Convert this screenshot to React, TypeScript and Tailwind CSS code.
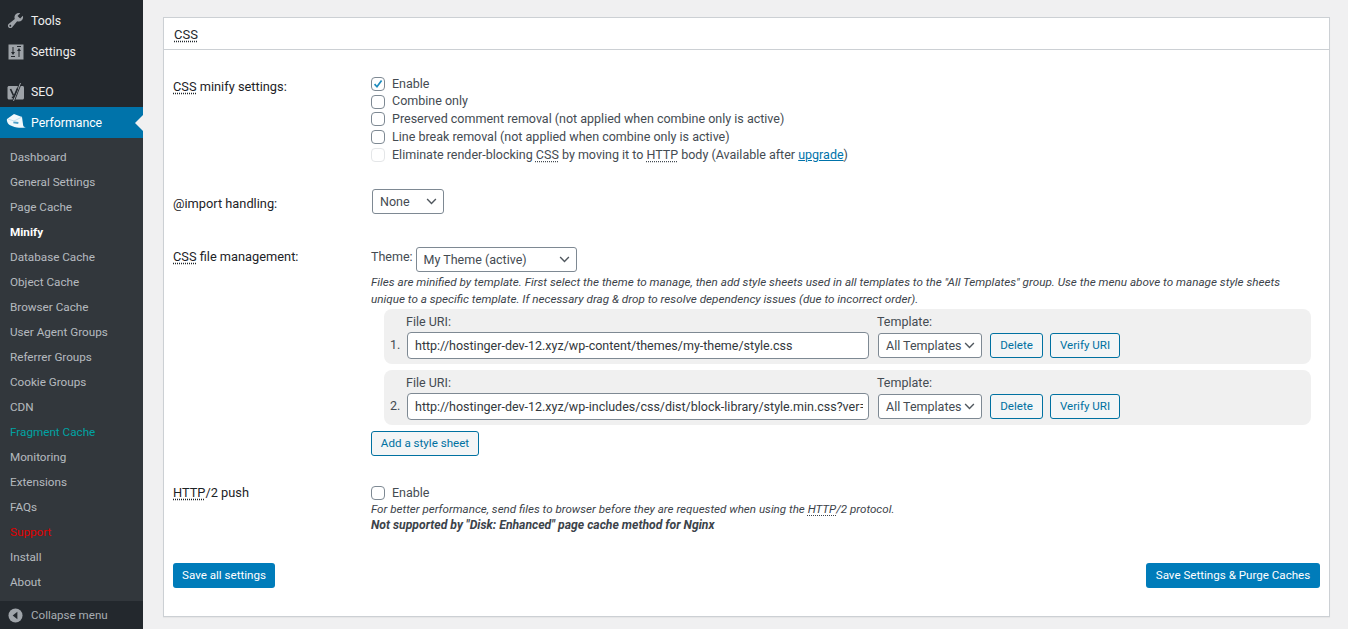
import React from "react";

const font = "font-['Roboto','Noto_Sans',sans-serif]";

function Abbr({ children }: { children: React.ReactNode }) {
  return <span className="underline decoration-dotted underline-offset-2">{children}</span>;
}

function Check({ checked, disabled, label }: { checked?: boolean; disabled?: boolean; label: React.ReactNode }) {
  return (
    <div className="flex items-center h-[17.8px]">
      <span className={`w-[14px] h-[14px] shrink-0 rounded-[4px] border flex items-center justify-center bg-white ${disabled ? "border-[#e4e6e8]" : "border-[#7e8993]"}`}>
        {checked && (
          <svg viewBox="0 0 14 14" className="w-[14px] h-[14px]"><path d="M3 7.2l2.8 3L11.2 2.8" fill="none" stroke="#1e8cbe" strokeWidth="2" /></svg>
        )}
      </span>
      <span className="ml-[7px] whitespace-nowrap">{label}</span>
    </div>
  );
}

function Chevron() {
  return (
    <svg viewBox="0 0 12 8" className="w-[11px] h-[7px] shrink-0"><path d="M1 1.2l5 5 5-5" fill="none" stroke="#50575e" strokeWidth="1.6" /></svg>
  );
}

function Select({ text, className }: { text: string; className: string }) {
  return (
    <div className={`flex items-center justify-between border border-[#7e8993] rounded-[3px] bg-white pl-[7px] pr-[6px] whitespace-nowrap ${className}`}>
      <span className="pt-[1px]">{text}</span>
      <Chevron />
    </div>
  );
}

function OutlineBtn({ children, className }: { children: React.ReactNode; className: string }) {
  return (
    <div className={`flex items-center justify-center border border-[#0071a1] rounded-[3px] bg-[#f3f5f6] text-[#0071a1] text-[11.6px] pt-[1px] whitespace-nowrap ${className}`}>
      {children}
    </div>
  );
}

function FileRow({ n, url }: { n: string; url: string }) {
  return (
    <div className="ml-[13px] w-[927px] h-[55px] rounded-[8px] bg-[#f0f0f0] pl-[6px] pt-[4px]">
      <div className="flex h-[18px] items-center">
        <span className="ml-[16px] w-[471px]">File URI:</span>
        <span>Template:</span>
      </div>
      <div className="flex items-center mt-[1px]">
        <span className="w-[17px]">{n}</span>
        <input
          readOnly
          value={url}
          className="w-[462px] h-[27px] border border-[#7e8993] rounded-[4px] bg-white pl-[7px] pr-[5px] text-[12.5px] text-[#32373c] outline-none"
        />
        <Select text="All Templates" className="ml-[9px] w-[104px] h-[25px]" />
        <OutlineBtn className="ml-[8px] w-[53px] h-[25px]">Delete</OutlineBtn>
        <OutlineBtn className="ml-[7px] w-[70px] h-[25px]">Verify URI</OutlineBtn>
      </div>
    </div>
  );
}

function Row({ label, className, children }: { label: React.ReactNode; className?: string; children: React.ReactNode }) {
  return (
    <div className={`flex ${className ?? ""}`}>
      <div className="w-[198px] shrink-0 text-[#1d2327] text-[12.8px] leading-[18px]">{label}</div>
      <div className="flex-1 min-w-0">{children}</div>
    </div>
  );
}

function TopItem({ icon, label, active }: { icon: React.ReactNode; label: string; active?: boolean }) {
  return (
    <div className={`flex items-center h-[31px] shrink-0 pl-[6px] text-[12.3px] ${active ? "bg-[#0073aa] text-white" : "text-[#eeeeee]"}`}>
      <span className="w-[25px] flex items-center justify-start shrink-0">{icon}</span>
      <span className="pt-[1px]">{label}</span>
      {active && <span className="ml-auto w-0 h-0 border-y-[8px] border-y-transparent border-r-[8px] border-r-[#f0f0f1]" />}
    </div>
  );
}

const subItems: { label: string; className?: string }[] = [
  { label: "Dashboard" },
  { label: "General Settings" },
  { label: "Page Cache" },
  { label: "Minify", className: "text-white font-bold" },
  { label: "Database Cache" },
  { label: "Object Cache" },
  { label: "Browser Cache" },
  { label: "User Agent Groups" },
  { label: "Referrer Groups" },
  { label: "Cookie Groups" },
  { label: "CDN" },
  { label: "Fragment Cache", className: "text-[#00a3a3]" },
  { label: "Monitoring" },
  { label: "Extensions" },
  { label: "FAQs" },
  { label: "Support", className: "text-[#e00000]" },
  { label: "Install" },
  { label: "About" },
];

export default function App() {
  return (
    <div className={`flex w-[1348px] h-[629px] overflow-hidden bg-[#f0f0f1] text-[12.5px] text-[#444b52] ${font}`}>
      <aside className="w-[143px] shrink-0 bg-[#23282d] flex flex-col">
        <div className="h-[5px] shrink-0" />
        <TopItem
          label="Tools"
          icon={
            <svg viewBox="0 0 20 20" className="w-[19px] h-[19px]" fill="#9ea3a8">
              <path d="M16.68 9.77c-1.34 1.34-3.3 1.67-4.95.99l-5.41 6.52c-.99.99-2.59.99-3.58 0s-.99-2.59 0-3.57l6.52-5.42c-.68-1.65-.35-3.61.99-4.95 1.28-1.28 3.12-1.62 4.72-1.06l-2.89 2.89 2.82 2.82 2.86-2.87c.53 1.58.18 3.39-1.08 4.65zM3.81 16.21c.4.39 1.04.39 1.43 0 .4-.4.4-1.04 0-1.43-.39-.4-1.03-.4-1.43 0-.39.39-.39 1.03 0 1.43z" />
            </svg>
          }
        />
        <TopItem
          label="Settings"
          icon={
            <svg viewBox="0 0 20 20" className="w-[20px] h-[20px]" fill="#9ea3a8">
              <path fillRule="evenodd" d="M2.500 2.500h15v15h-15zM6.500 5v5H5l2 3 2-3H7.500V5zM5 14v1h4v-1zM12.500 15h1V9H15l-2-3-2 3h1.500zM11 4v1h4V4z" />
            </svg>
          }
        />
        <div className="h-[9px] shrink-0" />
        <TopItem
          label="SEO"
          icon={
            <svg viewBox="0 0 20 20" className="w-[20px] h-[20px]">
              <path d="M3 4h13.500c.8 0 1.500.7 1.500 1.500V16c0 .8-.7 1.500-1.500 1.500H3c-.8 0-1.500-.7-1.500-1.500V5.500C1.500 4.700 2.200 4 3 4z" fill="#9ea3a8" />
              <path d="M14.500 1L7.500 19" stroke="#23282d" strokeWidth="2.600" />
              <path d="M14.500 1L7.500 19" stroke="#9ea3a8" strokeWidth="1" />
              <path d="M4.500 7l3 6.500M11.500 6.500L8.300 14c-.4 1-1.200 1.500-2.500 1.700" fill="none" stroke="#23282d" strokeWidth="1.700" />
            </svg>
          }
        />
        <TopItem
          label="Performance"
          active
          icon={
            <svg viewBox="0 0 20 20" className="w-[20px] h-[20px]">
              <path d="M1 6l7-5 8 3 1.200 8.500c.3 1 1.100 1.500 2.600 1.800-2.800.7-6 .7-8.800.2C8 14 3.500 12.500 2 10.500 1 9 .6 7 1 6z" fill="#f2f8fb" />
              <path d="M7.500 8.500l5 .6-.3 1.800-5-.6z" fill="#4f9fc7" />
              <path d="M2 6l6 2 8-4" fill="none" stroke="#b9d9e9" strokeWidth="0.800" />
            </svg>
          }
        />
        <div className="bg-[#32373c] pt-[7px] pb-[6px] shrink-0">
          {subItems.map((s) => (
            <div key={s.label} className={`h-[25px] flex items-center pl-[10px] pt-[1px] text-[11.7px] ${s.className ?? "text-[#f0f5fab3]"}`}>
              {s.label}
            </div>
          ))}
        </div>
        <div className="h-[28px] shrink-0 flex items-center pl-[8px] text-[#a8adb2] text-[11.6px]">
          <svg viewBox="0 0 16 16" className="w-[15px] h-[15px] shrink-0">
            <circle cx="8" cy="8" r="7.500" fill="#a0a5aa" />
            <path d="M10 4v8L5 8z" fill="#23282d" />
          </svg>
          <span className="ml-[8px] pt-[2px]">Collapse menu</span>
        </div>
      </aside>

      <main className="flex-1 min-w-0 pl-[20px] pr-[18px] pt-[17px]">
        <div className="h-[600px] border border-[#ccd0d4] bg-white shadow-[0_1px_1px_rgba(0,0,0,0.04)]">
          <div className="h-[32px] border-b border-[#ccd0d4] pl-[10px] pt-[2px] flex items-center text-[13px] text-[#23282d]">
            <Abbr>CSS</Abbr>
          </div>
          <div className="pl-[9px] pr-[9px] pt-[25px]">
            <Row label={<span className="relative top-[3px]"><Abbr>CSS</Abbr> minify settings:</span>}>
              <Check checked label="Enable" />
              <Check label="Combine only" />
              <Check label="Preserved comment removal (not applied when combine only is active)" />
              <Check label="Line break removal (not applied when combine only is active)" />
              <Check
                disabled
                label={
                  <>
                    Eliminate render-blocking <Abbr>CSS</Abbr> by moving it to <Abbr>HTTP</Abbr> body (Available after{" "}
                    <span className="text-[#0073aa] underline">upgrade</span>)
                  </>
                }
              />
            </Row>
            <Row className="mt-[25px] items-center" label={<span className="block pt-[5px]">@import handling:</span>}>
              <Select text="None" className="ml-[1px] w-[72px] h-[25px]" />
            </Row>
            <Row className="mt-[33px]" label={<span className="relative top-[1px]"><Abbr>CSS</Abbr> file management:</span>}>
              <div className="flex items-center h-[25px]">
                <span className="mb-[4px]">Theme:</span>
                <Select text="My Theme (active)" className="ml-[3px] w-[161px] h-[25px]" />
              </div>
              <div className="mt-[2px] italic text-[11.7px] leading-[17px] text-[#3c434a] pr-[30px]">
                Files are minified by template. First select the theme to manage, then add style sheets used in all templates to the "All Templates" group. Use the menu above to manage style sheets unique to a specific template. If necessary drag &amp; drop to resolve dependency issues (due to incorrect order).
              </div>
              <div className="mt-[1px] flex flex-col gap-[6px]">
                <FileRow n="1." url="http://hostinger-dev-12.xyz/wp-content/themes/my-theme/style.css" />
                <FileRow n="2." url="http://hostinger-dev-12.xyz/wp-includes/css/dist/block-library/style.min.css?ver=5.5.1" />
              </div>
              <OutlineBtn className="mt-[6px] w-[108px] h-[25px]">Add a style sheet</OutlineBtn>
            </Row>
            <Row className="mt-[28px]" label={<><Abbr>HTTP</Abbr>/2 push</>}>
              <Check label="Enable" />
              <div className="-mt-[1px] italic text-[11.6px] leading-[16px] text-[#3c434a]">
                For better performance, send files to browser before they are requested when using the <Abbr>HTTP</Abbr>/2 protocol.
              </div>
              <div className="italic font-bold text-[12.2px] leading-[16px] text-[#3c434a]">
                Not supported by "Disk: Enhanced" page cache method for Nginx
              </div>
            </Row>
            <div className="mt-[30px] flex justify-between">
              <div className="w-[102px] h-[25px] pt-[1px] rounded-[3px] bg-[#007cba] text-white text-[11.6px] flex items-center justify-center">Save all settings</div>
              <div className="w-[174px] h-[25px] pt-[1px] rounded-[3px] bg-[#007cba] text-white text-[11.6px] flex items-center justify-center">Save Settings &amp; Purge Caches</div>
            </div>
          </div>
        </div>
      </main>
    </div>
  );
}
